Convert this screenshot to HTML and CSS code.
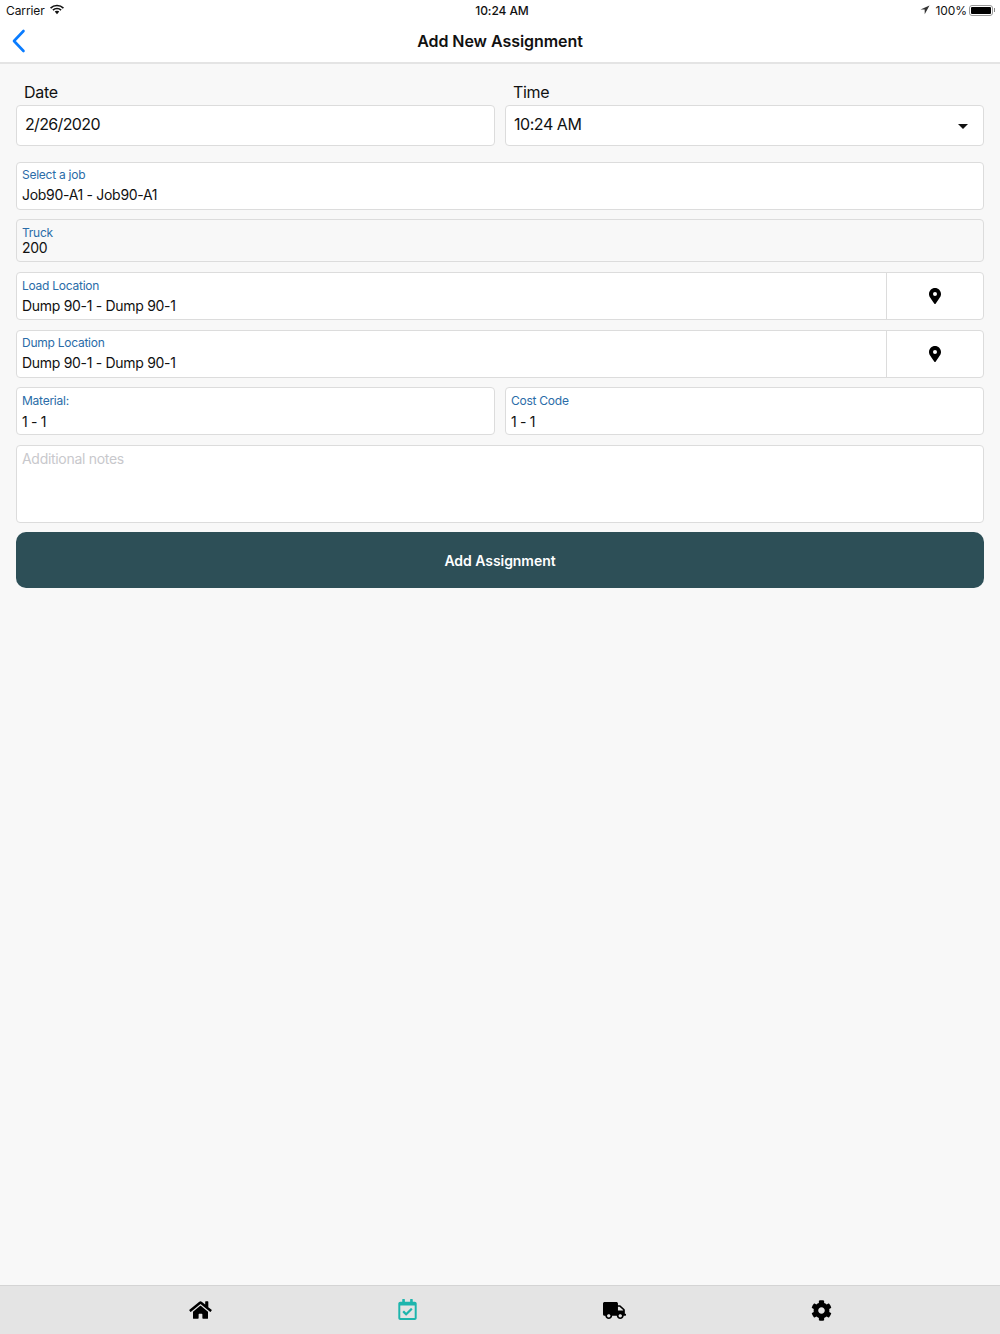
FILE: index.html
```html
<!DOCTYPE html>
<html lang="en">
<head>
<meta charset="utf-8">
<title>Add New Assignment</title>
<link rel="stylesheet" href="styles.css">
</head>
<body>
<div class="app">
  <header class="top">
    <div class="status">
      <div class="status-left">
        <span>Carrier</span>
        <svg class="wifi" viewBox="0 0 16 12"><path d="M8 0.500A11.500 11.500 0 0 0 0 3.700l1.300 1.400A9.600 9.600 0 0 1 8 2.400a9.600 9.600 0 0 1 6.700 2.700L16 3.700A11.500 11.500 0 0 0 8 0.500z"/><path d="M8 3.900a7.500 7.500 0 0 0-5.300 2.200L4 7.500a5.600 5.600 0 0 1 4-1.700 5.600 5.600 0 0 1 4 1.700l1.300-1.400A7.500 7.500 0 0 0 8 3.900z"/><path d="M8 7.300a3.500 3.500 0 0 0-2.600 1.100L8 11.500l2.600-3.100A3.500 3.500 0 0 0 8 7.300z"/></svg>
      </div>
      <div class="status-time">10:24 AM</div>
      <div class="status-right">
        <svg class="loc" viewBox="0 0 10 10"><path d="M9.500.5 .5 4.400h4.200v4.900z"/></svg>
        <span>100%</span>
        <span class="battery"><span class="battery-fill"></span></span>
        <span class="battery-tip"></span>
      </div>
    </div>
    <nav class="nav">
      <svg class="back" viewBox="0 0 14 24"><path d="M11.500 2 2 12l9.500 10"/></svg>
      <h1>Add New Assignment</h1>
    </nav>
  </header>

  <main class="form">
    <div class="row date-row">
      <div class="col">
        <div class="cap">Date</div>
        <div class="picker date-val">2/26/2020</div>
      </div>
      <div class="col">
        <div class="cap">Time</div>
        <div class="picker"><span>10:24 AM</span><span class="caret"></span></div>
      </div>
    </div>

    <div class="field job tight">
      <div class="lab">Select a job</div>
      <div class="val">Job90-A1 - Job90-A1</div>
    </div>

    <div class="field truck">
      <div class="lab">Truck</div>
      <div class="val">200</div>
    </div>

    <div class="field split">
      <div class="cell">
        <div class="lab">Load Location</div>
        <div class="val">Dump 90-1 - Dump 90-1</div>
      </div>
      <div class="pin-cell">
        <svg class="pin" viewBox="0 0 384 512"><path d="M172.268 501.670C26.970 291.031 0 269.413 0 192 0 85.961 85.961 0 192 0s192 85.961 192 192c0 77.413-26.970 99.031-172.268 309.670-9.535 13.774-29.930 13.773-39.464 0zM192 256a64 64 0 1 0 0-128 64 64 0 0 0 0 128z"/></svg>
      </div>
    </div>

    <div class="field split">
      <div class="cell tight">
        <div class="lab">Dump Location</div>
        <div class="val">Dump 90-1 - Dump 90-1</div>
      </div>
      <div class="pin-cell">
        <svg class="pin" viewBox="0 0 384 512"><path d="M172.268 501.670C26.970 291.031 0 269.413 0 192 0 85.961 85.961 0 192 0s192 85.961 192 192c0 77.413-26.970 99.031-172.268 309.670-9.535 13.774-29.930 13.773-39.464 0zM192 256a64 64 0 1 0 0-128 64 64 0 0 0 0 128z"/></svg>
      </div>
    </div>

    <div class="row pair">
      <div class="field job grow">
        <div class="lab">Material:</div>
        <div class="val">1 - 1</div>
      </div>
      <div class="field job grow">
        <div class="lab">Cost Code</div>
        <div class="val">1 - 1</div>
      </div>
    </div>

    <div class="notes">Additional notes</div>

    <button class="submit" type="button">Add Assignment</button>
  </main>

  <footer class="tabs">
    <svg class="tab home" viewBox="0 0 576 512"><path d="M280.37 148.26L96 300.11V464a16 16 0 0 0 16 16l112.06-.29a16 16 0 0 0 15.92-16V368a16 16 0 0 1 16-16h64a16 16 0 0 1 16 16v95.64a16 16 0 0 0 16 16.05L464 480a16 16 0 0 0 16-16V300L295.67 148.26a12.19 12.19 0 0 0-15.3 0zM571.6 251.47L488 182.56V44.05a12 12 0 0 0-12-12h-56a12 12 0 0 0-12 12v72.61L318.47 43a48 48 0 0 0-61 0L4.34 251.47a12 12 0 0 0-1.6 16.9l25.5 31A12 12 0 0 0 45.15 301l235.22-193.74a12.19 12.19 0 0 1 15.3 0L530.9 301a12 12 0 0 0 16.9-1.6l25.5-31a12 12 0 0 0-1.7-16.93z"/></svg>
    <svg class="tab cal" viewBox="0 0 448 512"><path d="M400 64h-48V12c0-6.627-5.373-12-12-12h-40c-6.627 0-12 5.373-12 12v52H160V12c0-6.627-5.373-12-12-12h-40c-6.627 0-12 5.373-12 12v52H48C21.49 64 0 85.490 0 112v352c0 26.510 21.490 48 48 48h352c26.510 0 48-21.490 48-48V112c0-26.510-21.490-48-48-48zm-6 400H54a6 6 0 0 1-6-6V160h352v298a6 6 0 0 1-6 6zm-52.849-200.650L198.842 404.519c-4.705 4.667-12.303 4.637-16.971-.068l-75.091-75.699c-4.667-4.705-4.637-12.303.068-16.971l22.719-22.536c4.705-4.667 12.303-4.637 16.970.069l44.104 44.461 111.072-110.181c4.705-4.667 12.303-4.637 16.971.068l22.536 22.718c4.667 4.705 4.636 12.303-.069 16.970z"/></svg>
    <svg class="tab truck-ic" viewBox="0 0 640 512" preserveAspectRatio="none"><path d="M624 352h-16V243.900c0-12.700-5.100-24.900-14.100-33.900L494 110.100c-9-9-21.200-14.100-33.900-14.100H416V48c0-26.500-21.500-48-48-48H48C21.500 0 0 21.500 0 48v320c0 26.500 21.500 48 48 48h16c0 53 43 96 96 96s96-43 96-96h128c0 53 43 96 96 96s96-43 96-96h48c8.800 0 16-7.200 16-16v-32c0-8.800-7.200-16-16-16zM160 464c-26.500 0-48-21.500-48-48s21.500-48 48-48 48 21.500 48 48-21.500 48-48 48zm320 0c-26.500 0-48-21.500-48-48s21.500-48 48-48 48 21.500 48 48-21.500 48-48 48zm80-208H416V144h44.100l99.900 99.900V256z"/></svg>
    <svg class="tab cog" viewBox="0 0 512 512"><path d="M487.400 315.700l-42.600-24.600c4.300-23.200 4.300-47 0-70.200l42.600-24.600c4.900-2.800 7.100-8.600 5.500-14-11.100-35.600-30-67.800-54.700-94.600-3.800-4.100-10-5.100-14.800-2.300L380.800 110c-17.900-15.400-38.500-27.300-60.800-35.100V25.800c0-5.600-3.900-10.500-9.400-11.700-36.700-8.200-74.300-7.800-109.200 0-5.500 1.200-9.400 6.100-9.400 11.700V75c-22.200 7.900-42.800 19.800-60.800 35.100L88.700 85.500c-4.900-2.800-11-1.900-14.800 2.300-24.700 26.700-43.600 58.900-54.700 94.600-1.700 5.400.6 11.200 5.500 14L67.300 221c-4.300 23.200-4.300 47 0 70.200l-42.600 24.600c-4.900 2.800-7.100 8.600-5.500 14 11.100 35.600 30 67.800 54.700 94.600 3.800 4.100 10 5.100 14.800 2.300l42.600-24.600c17.900 15.400 38.500 27.300 60.800 35.100v49.200c0 5.600 3.900 10.500 9.400 11.700 36.700 8.200 74.300 7.800 109.200 0 5.500-1.200 9.400-6.100 9.400-11.700v-49.200c22.200-7.900 42.800-19.800 60.800-35.100l42.600 24.600c4.900 2.800 11 1.900 14.800-2.300 24.700-26.700 43.600-58.900 54.700-94.600 1.500-5.500-.7-11.300-5.600-14.100zM256 336c-44.100 0-80-35.900-80-80s35.900-80 80-80 80 35.900 80 80-35.900 80-80 80z"/></svg>
  </footer>
</div>
</body>
</html>
```

FILE: styles.css
```css
* { box-sizing: border-box; }
html, body { margin: 0; height: 100%; }
body {
  font-family: Inter, "Liberation Sans", sans-serif;
  color: #111;
  background: #f8f8f8;
}
.app { height: 1334px; display: flex; flex-direction: column; }

.top { background: #fff; border-bottom: 2px solid #e4e4e4; height: 64px; }
.status {
  height: 20px;
  display: grid;
  grid-template-columns: 1fr auto 1fr;
  align-items: center;
  padding: 0 6px;
  font-size: 12px;
  letter-spacing: -0.1px;
}
.status-left { display: flex; align-items: center; gap: 5px; }
.wifi { width: 14px; height: 11px; fill: #111; margin-bottom: 1px; }
.status-time { font-weight: 500; padding-left: 4px; }
.status-right { display: flex; align-items: center; justify-content: flex-end; }
.loc { width: 10px; height: 10px; fill: #333; margin-right: 6px; }
.battery {
  width: 24px; height: 11px;
  border: 1px solid #999;
  border-radius: 3px;
  padding: 1px;
  margin-left: 2px;
  display: flex;
}
.battery-fill { flex: 1; background: #000; border-radius: 1px; }
.battery-tip { width: 1px; height: 4px; background: #888; margin-left: 1px; margin-right: -1px; }

.nav { height: 42px; display: flex; align-items: center; justify-content: center; position: relative; }
.nav h1 { margin: 0; font-size: 16px; font-weight: 600; letter-spacing: -0.05px; }
.back {
  position: absolute; left: 12px; top: 9px;
  width: 14px; height: 24px;
  fill: none; stroke: #0a7cff; stroke-width: 2.6; stroke-linecap: round; stroke-linejoin: round;
}

.form { flex: 1; padding: 18px 16px 0; display: flex; flex-direction: column; }
.row { display: flex; gap: 10px; margin-bottom: 10px; }
.date-row { margin-bottom: 16px; }
.pair { margin-top: -1px; }
.col { flex: 1 1 0; }
.cap { font-size: 16px; line-height: 21px; padding: 0 0 2px 8px; letter-spacing: -0.3px; }
.picker {
  height: 41px;
  background: #fff;
  border: 1px solid #dcdcdc;
  border-radius: 4px;
  padding: 0 8px 3px;
  font-size: 16px;
  letter-spacing: -0.45px;
  display: flex;
  align-items: center;
  justify-content: space-between;
}
.date-val { letter-spacing: -0.65px; }
.caret {
  width: 0; height: 0;
  border-left: 5px solid transparent;
  border-right: 5px solid transparent;
  border-top: 5px solid #111;
  margin: 4px 7px 0 0;
}

.field {
  background: #fff;
  border: 1px solid #dcdcdc;
  border-radius: 4px;
  margin-bottom: 10px;
}
.lab { font-size: 12px; color: #2a6ca8; line-height: 15px; letter-spacing: -0.25px; }
.val { font-size: 14px; line-height: 18px; letter-spacing: -0.3px; }
.job { height: 48px; padding: 5px 5px 0; }
.job .val { margin-top: 5px; }
.job.tight .val { margin-top: 4px; }
.job.tight, .cell.tight { padding-top: 4px; }
.row .job { margin-bottom: 0; }
.grow { flex: 1 1 0; }
.truck { height: 43px; padding: 5px 5px 0; background: #f8f8f8; margin-top: -1px; }
.truck .val { margin-top: -1px; }
.split { height: 48px; display: flex; }
.cell { flex: 1; padding: 5px 5px 0; }
.cell .val { margin-top: 4px; }
.pin-cell {
  width: 97px;
  border-left: 1px solid #dcdcdc;
  display: flex;
  align-items: center;
  justify-content: center;
}
.pin { width: 12px; height: 16px; fill: #000; }

.notes {
  height: 78px;
  background: #fff;
  border: 1px solid #dcdcdc;
  border-radius: 4px;
  padding: 4px 5px 0;
  font-size: 14px;
  line-height: 18px;
  letter-spacing: -0.3px;
  color: #c8c8cc;
  margin-bottom: 9px;
}
.submit {
  height: 56px;
  width: 100%;
  border: 0;
  border-radius: 10px;
  background: #2d4f57;
  color: #fff;
  font-family: inherit;
  font-size: 14px;
  font-weight: 600;
  letter-spacing: -0.05px;
  padding-bottom: 1px;
}

.tabs {
  height: 49px;
  background: #e4e4e4;
  border-top: 1px solid #d4d4d4;
  display: grid;
  grid-template-columns: repeat(4, 207px);
  justify-content: center;
  align-items: center;
  justify-items: center;
  padding-left: 22px;
}
.tab { height: 20px; width: 26px; fill: #000; }
.home { width: 23px; height: 20px; }
.cal { width: 19px; height: 21px; fill: #1eb5ad; margin-bottom: 1px; }
.truck-ic { width: 23px; height: 17px; }
.cog { width: 21px; height: 21px; }
```
